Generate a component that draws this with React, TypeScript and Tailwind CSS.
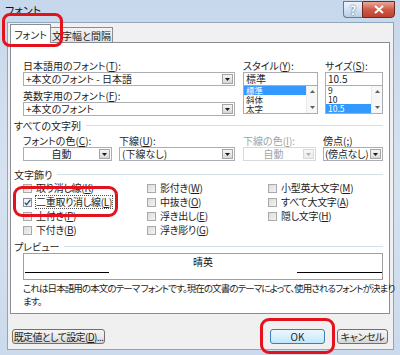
import React from "react";

const jp = "font-['Noto_Sans_CJK_JP',sans-serif] [font-feature-settings:'palt']";

function DropBtn({ disabled }: { disabled?: boolean }) {
  return (
    <div
      className={`w-[11px] h-[10px] mr-[1px] border flex items-center justify-center bg-gradient-to-b ${
        disabled ? "border-[#d8d8d8] from-[#f7f7f7] to-[#ececec]" : "border-[#a4a4a4] from-[#f6f6f6] to-[#d6d6d6]"
      }`}
    >
      <svg width="5" height="3" viewBox="0 0 5 3">
        <path d="M0 0h5L2.5 3z" fill={disabled ? "#b0b0b0" : "#1a1a1a"} />
      </svg>
    </div>
  );
}

// アクセスキーに下線を引いたラベル
function Label({ pre, key_, post, disabled }: { pre: string; key_: string; post: string; disabled?: boolean }) {
  return (
    <div className={`h-[13px] leading-[13px] text-[10px] whitespace-nowrap ${disabled ? "text-[#a3a3a3]" : "text-[#1e1e1e]"}`}>
      {pre}
      <u>{key_}</u>
      {post}
    </div>
  );
}

function Check({ label, k, checked, focus }: { label: string; k: string; checked?: boolean; focus?: boolean }) {
  return (
    <div className="h-[14px] flex items-center gap-[3px]">
      <div
        className={`w-[9px] h-[9px] border flex items-center justify-center ${
          checked ? "border-[#8f8f8f] bg-[#f4f4f4]" : "border-[#a9a9a9] bg-gradient-to-br from-[#dcdcdc] to-[#f4f4f4]"
        }`}
      >
        {checked && (
          <svg width="7" height="7" viewBox="0 0 7 7">
            <path d="M0.8 3.6 L2.6 5.6 L6.3 0.9" stroke="#2a4a8a" strokeWidth="1.4" fill="none" />
          </svg>
        )}
      </div>
      <span
        className={`text-[10px] leading-[12px] tracking-[-0.3px] text-[#1e1e1e] whitespace-nowrap ${
          focus ? "border border-dotted border-[#555]" : "border border-transparent"
        }`}
      >
        {label}(<u>{k}</u>)
      </span>
    </div>
  );
}

function Group({ title }: { title: string }) {
  return (
    <div className="h-[13px] flex items-center text-[10px] text-[#1e1e1e]">
      <span className="whitespace-nowrap">{title}</span>
      <div className="flex-1 h-px bg-[#d5dfe5] ml-[5px]" />
    </div>
  );
}

function ListBox({ items, sel, w }: { items: string[]; sel: number; w: string }) {
  return (
    <div className={`${w} h-[29px] -mt-px border border-[#abadb3] bg-white flex`}>
      <div className="flex-1 flex flex-col">
        {items.map((it, i) => (
          <div
            key={i}
            className={`h-[9px] leading-[9px] text-[8.5px] pl-[2px] ${
              i === sel ? "bg-[#3399ff] text-white" : "text-[#1e1e1e]"
            }`}
          >
            {it}
          </div>
        ))}
      </div>
      <div className="w-[11px] bg-[#f7f7f7] border-l border-[#eaeaea] flex flex-col items-center justify-between py-[4px]">
        <svg width="5" height="3" viewBox="0 0 5 3">
          <path d="M0 3h5L2.5 0z" fill="#606060" />
        </svg>
        <svg width="5" height="3" viewBox="0 0 5 3">
          <path d="M0 0h5L2.5 3z" fill="#606060" />
        </svg>
      </div>
    </div>
  );
}

const btn =
  "h-[15px] border rounded-[3px] bg-gradient-to-b text-[10px] leading-none text-[#1e1e1e] whitespace-nowrap flex items-center justify-center";

export default function App() {
  return (
    <div className={`${jp} relative w-[400px] h-[355px] overflow-hidden bg-gradient-to-b from-[#c7d8ec] via-[#d6e2f0] to-[#cbdaec] flex flex-col`}>
      {/* タイトルバー */}
      <div className="h-[22px] flex items-start shrink-0">
        <span className="ml-[5px] mt-[3px] text-[11px] leading-[15px] text-[#111]">フォント</span>
        <div className="flex-1" />
        <div className="mt-[1px] mr-[5px] flex">
          <div className="w-[19px] h-[17px] border border-[#5d7c9e] border-r-0 rounded-bl-[4px] bg-gradient-to-b from-[#eef4fa] via-[#d4e2f1] to-[#b9cfe7] flex items-center justify-center text-[12px] font-bold text-white [text-shadow:0_0_2px_#203c60]">
            ?
          </div>
          <div className="w-[33px] h-[17px] border border-[#6a2a22] rounded-br-[4px] bg-gradient-to-b from-[#e9a898] via-[#cf5a48] to-[#c0402f] flex items-center justify-center">
            <svg width="10" height="9" viewBox="0 0 10 9">
              <path d="M1 1l8 7M9 1L1 8" stroke="white" strokeWidth="2" />
            </svg>
          </div>
        </div>
      </div>

      {/* クライアント領域 */}
      <div className="ml-[7px] mr-[6px] mb-[5px] flex-1 bg-[#f0f0f0] border border-[#8fa5bf] pl-[2px] pt-[1px] flex flex-col">
        {/* タブ */}
        <div className="h-[18px] flex items-end">
          <div className="relative z-10 -mb-px h-[19px] w-[41px] bg-white border border-b-0 border-[#898c95] flex items-center justify-center text-[10px] text-[#1e1e1e]">
            フォント
          </div>
          <div className="h-[15px] w-[62px] border border-l-0 border-b-0 border-[#898c95] bg-gradient-to-b from-[#f3f3f3] to-[#e1e1e1] flex items-center justify-center text-[10px] text-[#1e1e1e] whitespace-nowrap">
            文字幅と間隔
          </div>
        </div>

        {/* タブページ */}
        <div className="w-[380px] h-[272px] border border-[#898c95] bg-white pl-[3px] pr-[6px] pt-[16px] flex flex-col">
          <div className="flex h-[57px]">
            <div className="ml-[9px] w-[212px] flex flex-col">
              <Label pre="日本語用のフォント(" key_="T" post="):" />
              <div className="h-[14px] border border-[#abadb3] bg-white flex items-center">
                <span className="flex-1 pl-[2px] text-[10px] leading-none text-[#1e1e1e]">+本文のフォント - 日本語</span>
                <DropBtn />
              </div>
              <div className="mt-[3px]">
                <Label pre="英数字用のフォント(" key_="F" post="):" />
              </div>
              <div className="h-[14px] border border-[#abadb3] bg-white flex items-center">
                <span className="flex-1 pl-[2px] text-[10px] leading-none text-[#1e1e1e]">+本文のフォント</span>
                <DropBtn />
              </div>
            </div>
            <div className="ml-[8px] w-[75px] flex flex-col">
              <Label pre="スタイル(" key_="Y" post="):" />
              <div className="h-[14px] border border-[#abadb3] bg-white pl-[2px] text-[10px] leading-[12px] text-[#1e1e1e]">標準</div>
              <ListBox items={["標準", "斜体", "太字"]} sel={0} w="w-[75px]" />
            </div>
            <div className="ml-[7px] w-[58px] flex flex-col">
              <Label pre="サイズ(" key_="S" post="):" />
              <div className="h-[14px] border border-[#abadb3] bg-white pl-[2px] text-[10px] leading-[12px] text-[#1e1e1e]">10.5</div>
              <ListBox items={["9", "10", "10.5"]} sel={2} w="w-[58px]" />
            </div>
          </div>

          <div className="mt-[3px]">
            <Group title="すべての文字列" />
          </div>
          <div className="mt-[2px] flex">
            <div className="ml-[9px] w-[89px] flex flex-col">
              <Label pre="フォントの色(" key_="C" post="):" />
              <div className="h-[14px] border border-[#abadb3] bg-white flex items-center">
                <span className="flex-1 text-center text-[10px] leading-none text-[#1e1e1e]">自動</span>
                <DropBtn />
              </div>
            </div>
            <div className="ml-[7px] w-[116px] flex flex-col">
              <Label pre="下線(" key_="U" post="):" />
              <div className="h-[14px] border border-[#abadb3] bg-white flex items-center">
                <span className="flex-1 pl-[2px] text-[10px] leading-none text-[#1e1e1e]">(下線なし)</span>
                <DropBtn />
              </div>
            </div>
            <div className="ml-[8px] w-[73px] flex flex-col">
              <Label pre="下線の色(" key_="I" post="):" disabled />
              <div className="h-[14px] border border-[#d9d9d9] bg-white flex items-center">
                <span className="flex-1 text-center text-[10px] leading-none text-[#a3a3a3]">自動</span>
                <DropBtn disabled />
              </div>
            </div>
            <div className="ml-[7px] w-[60px] flex flex-col">
              <Label pre="傍点(" key_=";" post=")" />
              <div className="h-[14px] border border-[#abadb3] bg-white flex items-center">
                <span className="flex-1 pl-[1px] text-[10px] leading-none tracking-[-0.3px] text-[#1e1e1e] whitespace-nowrap">(傍点なし)</span>
                <DropBtn />
              </div>
            </div>
          </div>

          <div className="mt-[7px]">
            <Group title="文字飾り" />
          </div>
          <div className="flex">
            <div className="ml-[9px] w-[124px] flex flex-col">
              <Check label="取り消し線" k="K" />
              <Check label="二重取り消し線" k="L" checked focus />
              <Check label="上付き" k="P" />
              <Check label="下付き" k="B" />
            </div>
            <div className="w-[121px] flex flex-col">
              <Check label="影付き" k="W" />
              <Check label="中抜き" k="O" />
              <Check label="浮き出し" k="E" />
              <Check label="浮き彫り" k="G" />
            </div>
            <div className="flex flex-col">
              <Check label="小型英大文字" k="M" />
              <Check label="すべて大文字" k="A" />
              <Check label="隠し文字" k="H" />
            </div>
          </div>

          <div className="mt-[3px]">
            <Group title="プレビュー" />
          </div>
          <div className="ml-[9px] w-[360px] h-[27px] border border-[#a0a0a0] bg-white flex pl-[1px]">
            <div className="w-[84px] h-[19px] border-b border-black" />
            <div className="flex-1 text-center text-[10px] leading-[13px] pt-[1px] text-[#111]">晴英</div>
            <div className="w-[85px] h-[19px] border-b border-black" />
          </div>
          <div className="mt-[2px] ml-[9px] text-[9.5px] leading-[13px] tracking-[-0.9px] text-[#1e1e1e] whitespace-nowrap">
            これは日本語用の本文のテーマ フォントです。現在の文書のテーマによって、使用されるフォントが決まり
            <br />
            ます。
          </div>
        </div>

        {/* ボタン */}
        <div className="mt-[15px] flex">
          <button className={`${btn} ml-[2px] w-[93px] tracking-[-0.6px] border-[#707070] from-[#f4f4f4] via-[#ebebeb] to-[#d4d4d4]`}>
            既定値として設定(<u>D</u>)...
          </button>
          <div className="flex-1" />
          <button className={`${btn} w-[55px] border-[#3c7fb1] from-[#eaf6fd] via-[#d9f0fc] to-[#bee6fd]`}>
            OK
          </button>
          <button className={`${btn} ml-[12px] mr-[5px] w-[51px] tracking-[-0.3px] border-[#707070] from-[#f4f4f4] via-[#ebebeb] to-[#d4d4d4]`}>
            キャンセル
          </button>
        </div>
      </div>

      {/* 赤い囲み */}
      <div className="absolute left-[2px] top-[13px] w-[61px] h-[34px] border-[3px] border-[#e3121c] rounded-[8px]" />
      <div className="absolute left-[13px] top-[186px] w-[105px] h-[31px] border-[3px] border-[#e3121c] rounded-[9px]" />
      <div className="absolute left-[260px] top-[318px] w-[75px] h-[36px] border-[3px] border-[#e3121c] rounded-[9px]" />
    </div>
  );
}
